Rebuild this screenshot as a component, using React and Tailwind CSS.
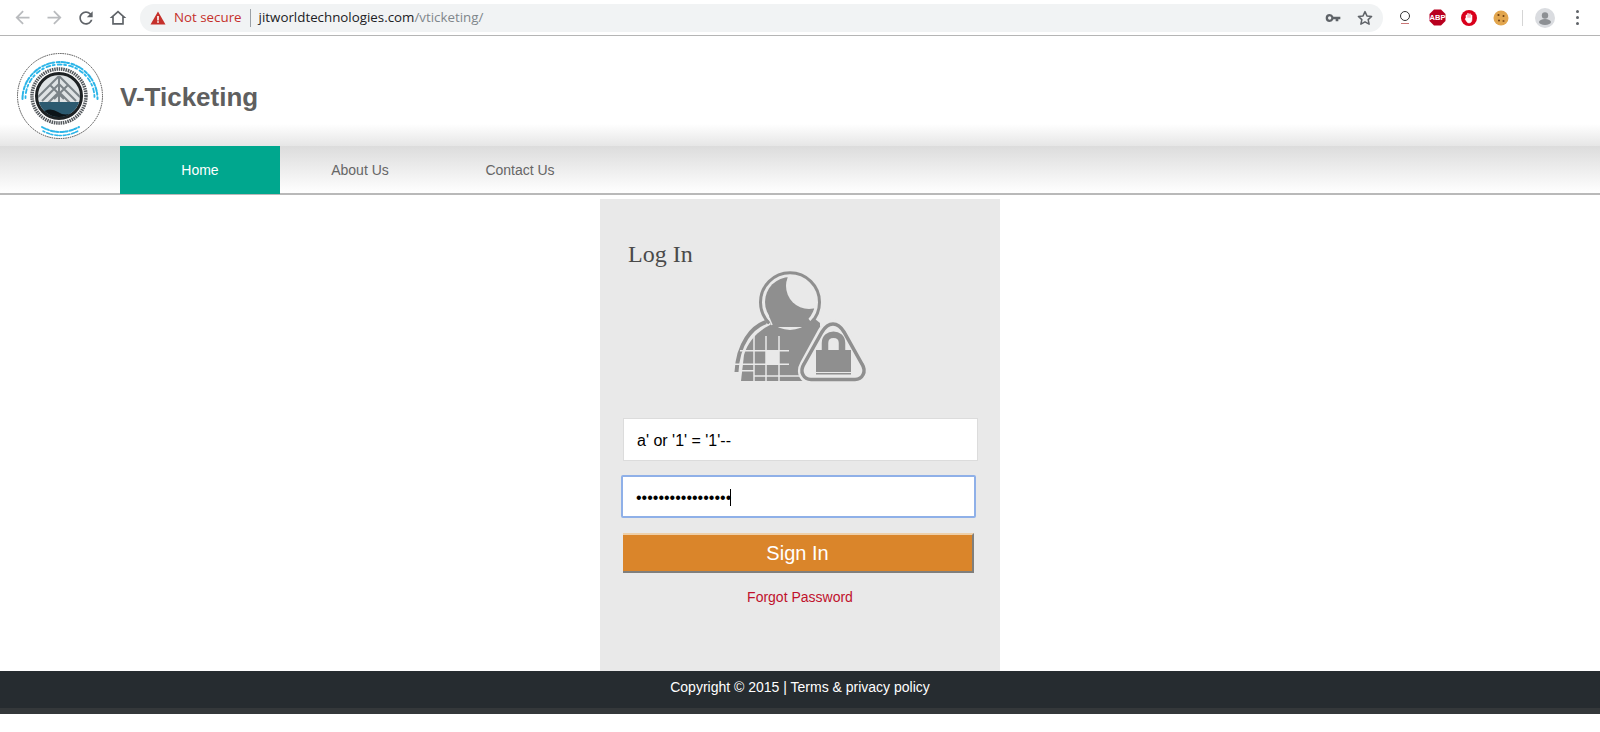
import { useRef, useEffect } from "react";

function LogoMark() {
  return (
    <svg width="88" height="88" viewBox="0 0 88 88" className="mt-[16px] shrink-0">
      <circle cx="44" cy="44" r="42.500" fill="#fff" stroke="#222" strokeWidth="0.8" strokeDasharray="1.5 0.8" />
      {/* telugu lettering ring, drawn as a texture */}
      <path d="M6.500 47 A37.500 37 0 1 1 81.500 47" fill="none" stroke="#2cb5e8" strokeWidth="2" strokeDasharray="4 1.500 2 2.500 3 2" strokeLinecap="round" />
      <path d="M9.500 46 A34.500 33.500 0 1 1 78.500 46" fill="none" stroke="#2cb5e8" strokeWidth="1.800" strokeDasharray="2 3 4 2.500" strokeLinecap="round" />
      <path d="M26 75 Q44 85 63 75" fill="none" stroke="#2cb5e8" strokeWidth="2" strokeDasharray="4 1.500 2 2" strokeLinecap="round" />
      <path d="M27 79 Q44 88 62 79" fill="none" stroke="#2cb5e8" strokeWidth="1.600" strokeDasharray="2 2 3 1.500" strokeLinecap="round" />
      <circle cx="43" cy="44" r="27" fill="none" stroke="#54595d" strokeWidth="3.500" strokeDasharray="1.500 0.8" />
      <circle cx="43" cy="44" r="22.500" fill="#dfe3e5" stroke="#1e2224" strokeWidth="3" />
      <clipPath id="logoClip">
        <circle cx="43" cy="44" r="21" />
      </clipPath>
      <g clipPath="url(#logoClip)">
        <path d="M43 24 L66 47 M43 24 L20 47 M43 32 L60 49 M43 32 L26 49 M43 40 L54 51 M43 40 L32 51 M43 24 V52 M34 33 L48 47 M52 33 L38 47" stroke="#7b8388" strokeWidth="2" fill="none" />
        <rect x="18" y="50" width="52" height="20" fill="#2c5a70" />
        <path d="M24 62 Q33 54 42 60 T60 58 L62 70 L24 70 Z" fill="#0c1418" />
      </g>
    </svg>
  );
}

function LoginIcon() {
  const c = "#8f8f8f";
  const bg = "#e9e9e9";
  return (
    <svg width="150" height="120" viewBox="0 0 150 120" className="block">
      {/* shoulder band and body */}
      <path d="M46 57 C32 62 18 78 16.500 107" fill="none" stroke={c} strokeWidth="4" />
      <path d="M50 60 C38 66 28 76 24 90 L21 116 H100 V58 L90 50 Z" fill={c} />
      {/* head */}
      <circle cx="70" cy="37" r="28" fill={bg} />
      <path d="M48 44 L51 62 H95 L87 52 L94 44 Z" fill={c} />
      <circle cx="70" cy="37" r="25" fill={c} />
      <circle cx="89" cy="21" r="23" fill={bg} />
      <path d="M49 58 A29.500 29.500 0 1 1 91 58" fill="none" stroke={c} strokeWidth="3" />
      <path d="M90 57 L100 63" fill="none" stroke={c} strokeWidth="3" />
      <path d="M49.500 58 L46 56" fill="none" stroke={c} strokeWidth="3" />
      <path d="M52 60 L49 53" fill="none" stroke={bg} strokeWidth="1.500" />
      {/* mesh */}
      <path d="M34 71 V116 M46 71 V116 M59 71 V116 M20 85.800 H69 M12 99.200 H69 M20 105.800 H34 M34 111 H83" stroke={bg} strokeWidth="1.500" fill="none" />
      <rect x="46" y="86" width="13" height="13" fill={bg} />
      {/* lock badge */}
      <path d="M113 58 C108 58 105 61 102 66 L84 99 C79 108 84 115 91 115 H135 C142 115 147 108 142 99 L124 66 C121 61 118 58 113 58 Z" fill={bg} stroke={bg} strokeWidth="8" />
      <path d="M113 59 C108 59 105 62 102 67 L84 99 C79 107 84 114.500 91 114.500 H135 C142 114.500 147 107 142 99 L124 67 C121 62 118 59 113 59 Z" fill={bg} stroke={c} strokeWidth="3.500" />
      <rect x="96" y="85" width="35" height="22" fill={c} />
      <rect x="96" y="108" width="35" height="1.500" fill={c} />
      <path d="M105 86 V78 C105 67 122 67 122 78 V86" fill="none" stroke={c} strokeWidth="6.500" />
    </svg>
  );
}

function ToolIcon({ d, color = "#5f6368", size = 20 }) {
  return (
    <svg width={size} height={size} viewBox="0 0 24 24" fill={color}>
      <path d={d} />
    </svg>
  );
}

function BrowserBar() {
  return (
    <div className="flex h-[36px] items-center border-b border-[#b5b5b5] bg-white pl-[6px]">
      <div className="flex w-[32px] justify-center">
        <ToolIcon size={21} color="#b9bbbe" d="M20 11H7.830l5.590-5.590L12 4l-8 8 8 8 1.410-1.410L7.830 13H20v-2z" />
      </div>
      <div className="flex w-[32px] justify-center">
        <ToolIcon size={21} color="#b9bbbe" d="M4 11h12.170l-5.590-5.590L12 4l8 8-8 8-1.410-1.410L16.170 13H4v-2z" />
      </div>
      <div className="flex w-[32px] justify-center">
        <ToolIcon d="M17.650 6.350C16.200 4.900 14.210 4 12 4c-4.420 0-7.990 3.580-7.990 8s3.570 8 7.990 8c3.730 0 6.840-2.550 7.730-6h-2.080c-.82 2.330-3.040 4-5.650 4-3.310 0-6-2.690-6-6s2.690-6 6-6c1.660 0 3.140.69 4.220 1.780L13 11h7V4l-2.350 2.350z" />
      </div>
      <div className="flex w-[32px] justify-center">
        <ToolIcon d="M12 5.690l5 4.500V18H7v-7.810l5-4.500M12 3L2 12h3v8h14v-8h3L12 3z" size={20} />
      </div>
      <div className="ml-[6px] flex h-[28px] w-[1243px] items-center rounded-full bg-[#f1f3f4] pl-[10px] pr-[9px] font-['Open_Sans',sans-serif] text-[13.33px]">
        <svg width="16" height="16" viewBox="0 0 16 16" className="mr-[8px]">
          <path d="M8 1.500 L15.500 14.500 H0.500 Z" fill="#c5302b" />
          <rect x="7.200" y="6" width="1.600" height="4.500" fill="#fff" />
          <rect x="7.200" y="11.200" width="1.600" height="1.600" fill="#fff" />
        </svg>
        <span className="text-[#c5302b]">Not secure</span>
        <span className="mx-[8px] h-[18px] w-px bg-[#9aa0a6]" />
        <span className="text-[#202124]">jitworldtechnologies.com</span>
        <span className="text-[#80868b]">/vticketing/</span>
        <div className="ml-auto flex items-center gap-[15px]">
          <svg width="16" height="16" viewBox="0 0 24 24" fill="#5f6368">
            <path d="M12.650 10A6 6 0 0 0 7 6a6 6 0 0 0 0 12 6 6 0 0 0 5.650-4H16v3h4v-3h3v-4H12.650zM7 14.500a2.500 2.500 0 1 1 0-5 2.500 2.500 0 0 1 0 5z" />
          </svg>
          <svg width="18" height="18" viewBox="0 0 24 24" fill="none" stroke="#5f6368" strokeWidth="2">
            <path d="M12 3.500l2.600 5.700 6.200.7-4.600 4.200 1.300 6.100L12 17.100l-5.500 3.100 1.300-6.100L3.200 9.900l6.200-.7z" strokeLinejoin="round" />
          </svg>
        </div>
      </div>
      <div className="flex flex-1 items-center">
        <div className="ml-[14px] flex w-[16px] flex-col items-center">
          <span className="h-[10px] w-[10px] rounded-full border-[1.500px] border-[#333]" />
          <span className="mt-[2px] h-[1.500px] w-[8px] bg-[#c77]" />
        </div>
        <svg width="17" height="17" viewBox="0 0 17 17" className="ml-[16px]">
          <path d="M5 0.500 H12 L16.500 5 V12 L12 16.500 H5 L0.500 12 V5 Z" fill="#b8001f" />
          <text x="8.500" y="11" textAnchor="middle" fontSize="7.500" fontWeight="700" fill="#fff" fontFamily="Liberation Sans, sans-serif">ABP</text>
        </svg>
        <svg width="16" height="16" viewBox="0 0 16 16" className="ml-[15px]">
          <circle cx="8" cy="8" r="8" fill="#d9001b" />
          <path d="M5 8 V5 h1 V8 M6.500 8 V3.500 h1 V8 M8.500 8 V3.800 h1 V8 M10 8 V5 h1 v4 C11 12 9.500 13 8 13 C6 13 5.500 11 4 9 L5 8 Z" fill="#fff" stroke="#fff" strokeWidth="0.5" />
        </svg>
        <svg width="16" height="16" viewBox="0 0 16 16" className="ml-[16px]">
          <circle cx="8" cy="8" r="7.500" fill="#e2a64e" />
          <circle cx="5.500" cy="5" r="1.100" fill="#6b3d12" />
          <circle cx="10.500" cy="6" r="1" fill="#6b3d12" />
          <circle cx="6" cy="10.500" r="1" fill="#6b3d12" />
          <circle cx="10.500" cy="11" r="1.100" fill="#8a5420" />
        </svg>
        <span className="ml-[13px] h-[16px] w-px bg-[#d5d5d5]" />
        <svg width="20" height="20" viewBox="0 0 20 20" className="ml-[12px]">
          <circle cx="10" cy="10" r="10" fill="#dadce0" />
          <circle cx="10" cy="7.500" r="3.200" fill="#8d9094" />
          <ellipse cx="10" cy="14" rx="6" ry="3" fill="#8d9094" />
        </svg>
        <div className="ml-[21px] flex flex-col gap-[3px]">
          <span className="h-[3px] w-[3px] rounded-full bg-[#5f6368]" />
          <span className="h-[3px] w-[3px] rounded-full bg-[#5f6368]" />
          <span className="h-[3px] w-[3px] rounded-full bg-[#5f6368]" />
        </div>
      </div>
    </div>
  );
}

function SiteHeader() {
  return (
    <div className="flex h-[110px] items-start bg-gradient-to-b from-white from-[80%] to-[#e6e6e6] pl-[16px]">
      <LogoMark />
      <h1 className="ml-[16px] mt-[46px] text-[26px] font-bold leading-[30px] text-[#5f5f5f]">V-Ticketing</h1>
    </div>
  );
}

function NavBar() {
  return (
    <div className="flex h-[49px] border-b-[2px] border-[#b9b9b9] bg-gradient-to-b from-[#dcdcdc] to-white pl-[120px] text-[14px] text-[#666]">
      <a className="-mb-px flex w-[160px] items-center justify-center bg-[#00a78e] text-white">Home</a>
      <a className="-mb-px flex w-[160px] items-center justify-center">About Us</a>
      <a className="-mb-px flex w-[160px] items-center justify-center">Contact Us</a>
    </div>
  );
}

function LoginPanel() {
  const pass = useRef(null);
  useEffect(() => {
    pass.current?.focus();
  }, []);
  return (
    <div className="mx-auto mt-[4px] h-[472px] w-[400px] bg-[#e9e9e9]">
      <h2 className="pl-[28px] pt-[41px] font-['Liberation_Serif',serif] text-[24px] leading-[28px] text-[#4a4a4a]">Log In</h2>
      <div className="ml-[120px] mt-[-3px]">
        <LoginIcon />
      </div>
      <input
        readOnly
        value="a' or '1' = '1'--"
        className="ml-[23px] mt-[33px] block h-[43px] w-[355px] border border-[#dcdcdc] bg-white px-[13px] pt-[3px] text-[16px] text-black outline-none"
      />
      <div className="relative ml-[21px] mt-[14px] h-[43px] w-[355px]">
        <input
          ref={pass}
          readOnly
          type="password"
          value="aaaaaaaaaaaaaaaaa"
          className="block h-full w-full rounded-[2px] border-2 border-[#8fb0e8] bg-white px-[13px] pt-[3px] text-[16px] text-black caret-transparent outline-none"
        />
        <span className="absolute left-[109px] top-[14px] h-[17px] w-px bg-black" />
      </div>
      <button className="ml-[23px] mt-[15px] flex h-[40px] w-[351px] items-center justify-center border-b-[2px] border-r-[2px] border-t-[2px] border-b-[#807f7c] border-r-[#807f7c] border-t-[#eecfa8] bg-[#da852a] text-[20px] text-white">
        Sign In
      </button>
      <p className="mt-[14px] text-center text-[14px] text-[#c0112c]">Forgot Password</p>
    </div>
  );
}

export default function App() {
  return (
    <div className="min-h-[732px] bg-white font-['Liberation_Sans',Arial,sans-serif]">
      <BrowserBar />
      <SiteHeader />
      <NavBar />
      <LoginPanel />
      <div className="border-b-[6px] border-[#34383a] bg-[#262c30] pb-[11px] pt-[7px] text-center text-[14px] leading-[19px] text-white">
        Copyright © 2015 | Terms &amp; privacy policy
      </div>
    </div>
  );
}
